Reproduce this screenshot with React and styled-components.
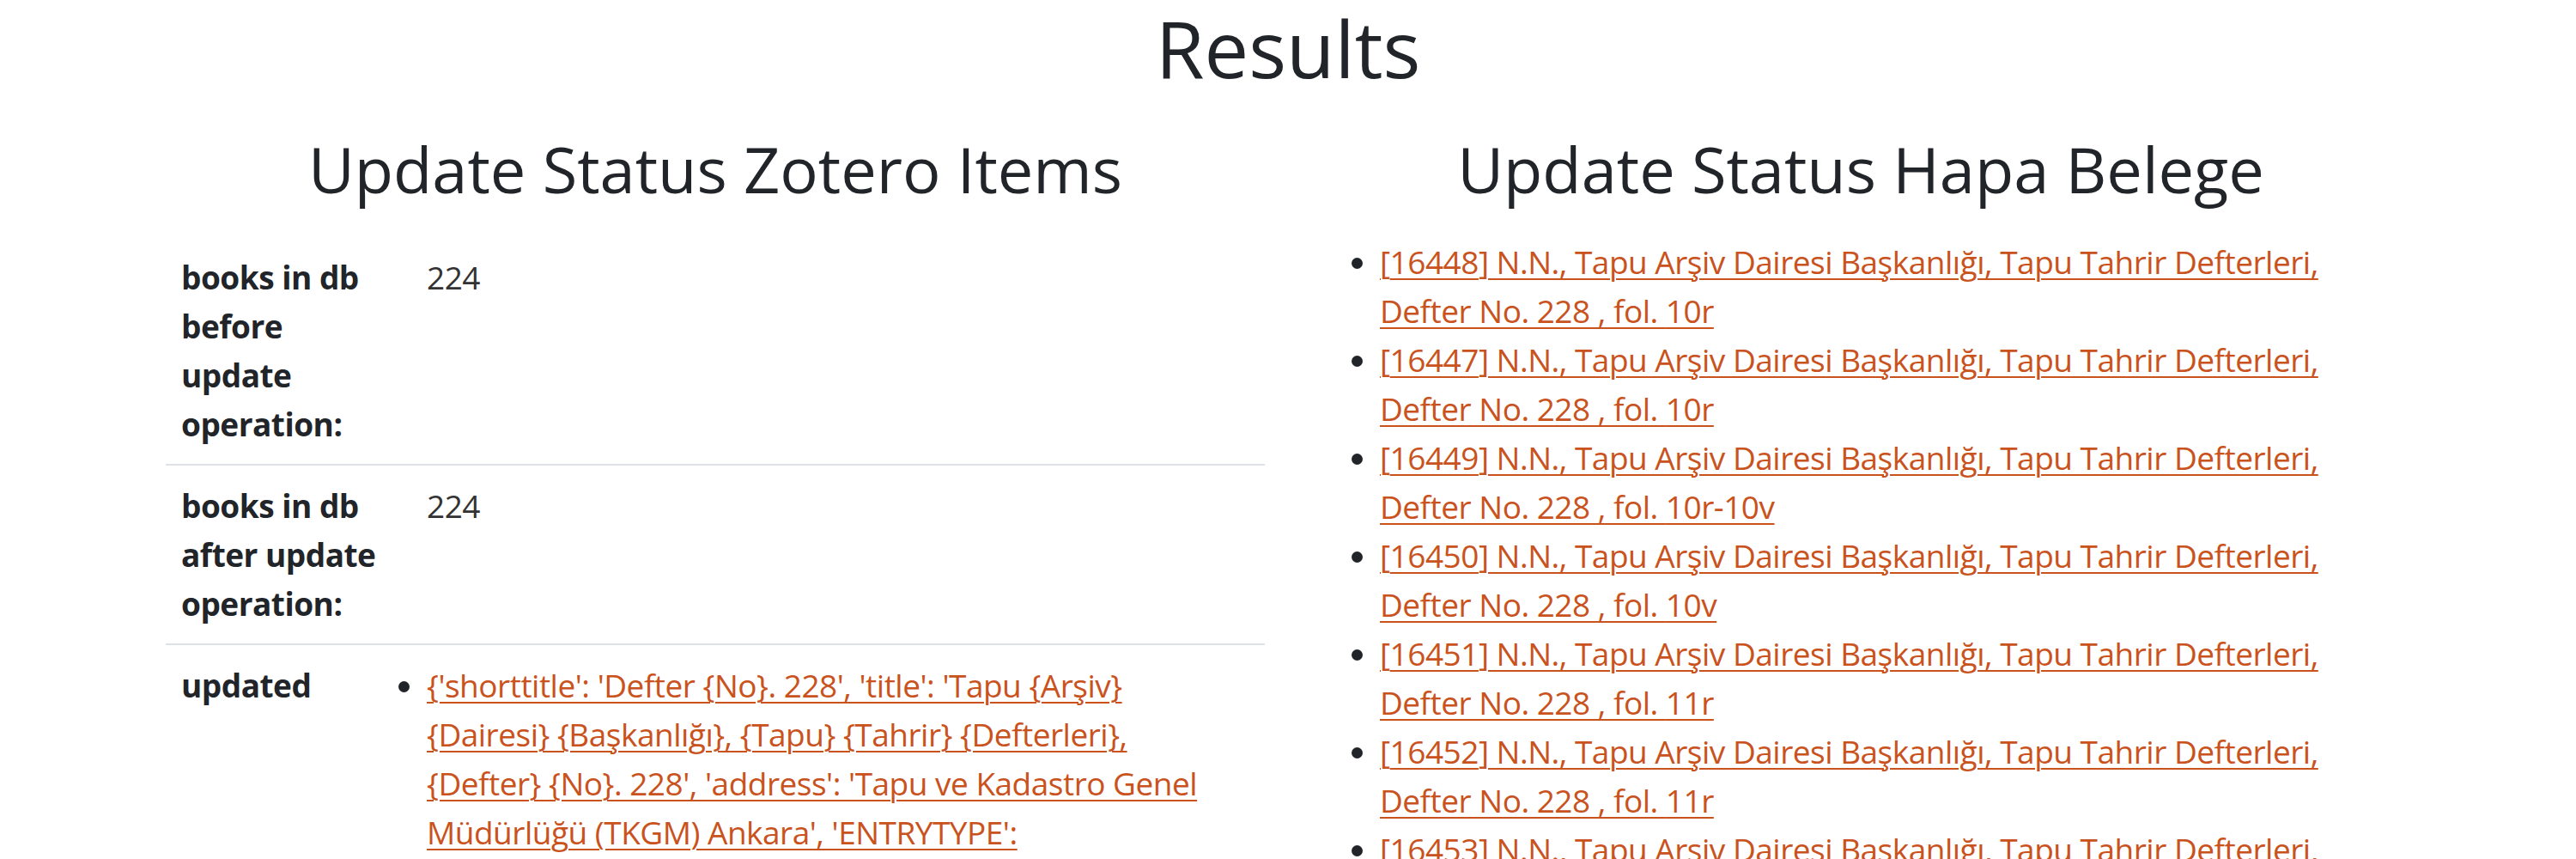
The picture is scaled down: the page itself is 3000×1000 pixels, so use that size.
import React from 'react'
import styled, { createGlobalStyle } from 'styled-components'

const GlobalStyle = createGlobalStyle`
  html, body {
    margin: 0;
    padding: 0;
    background: #fff;
    overflow: hidden;
  }
  body {
    font-family: "Open Sans", "Noto Sans", sans-serif;
    font-size: 37px;
    line-height: 57px;
    letter-spacing: -0.5px;
    color: #212529;
  }
`

const statusRows = [
  { label: ['books in db', 'before', 'update', 'operation:'], value: '224' },
  { label: ['books in db', 'after update', 'operation:'], value: '224' }
]

const updatedLines = [
  "{'shorttitle': 'Defter {No}. 228', 'title': 'Tapu {Arşiv}",
  '{Dairesi} {Başkanlığı}, {Tapu} {Tahrir} {Defterleri},',
  "{Defter} {No}. 228', 'address': 'Tapu ve Kadastro Genel",
  "Müdürlüğü (TKGM) Ankara', 'ENTRYTYPE':",
  "'book', 'ID': 'TapuArsivDairesiBaskanligi228', 'publisher':",
  "'Tapu Arşiv Dairesi Başkanlığı'}"
]

const belege = [
  { id: 16448, fol: '10r' },
  { id: 16447, fol: '10r' },
  { id: 16449, fol: '10r-10v' },
  { id: 16450, fol: '10v' },
  { id: 16451, fol: '11r' },
  { id: 16452, fol: '11r' },
  { id: 16453, fol: '11v' },
  { id: 16454, fol: '11v-12r' },
  { id: 16455, fol: '12r' }
]

const App = () => {
  return (
    <>
      <GlobalStyle />
      <Page>
        <Title>Results</Title>
        <Columns>
          <Column>
            <Heading>Update Status Zotero Items</Heading>
            <Table>
              <tbody>
                {statusRows.map((row, i) => (
                  <Row key={i}>
                    <Label>
                      {row.label.map((line, j) => (
                        <LabelLine key={j}>{line}</LabelLine>
                      ))}
                    </Label>
                    <Value>{row.value}</Value>
                  </Row>
                ))}
                <Row>
                  <Label>
                    <LabelLine>updated</LabelLine>
                  </Label>
                  <Value>
                    <CellList>
                      <li>
                        <Link href="#">
                          {updatedLines.map((line, j) => (
                            <React.Fragment key={j}>
                              {line}
                              {j < updatedLines.length - 1 && <br />}
                            </React.Fragment>
                          ))}
                        </Link>
                      </li>
                    </CellList>
                  </Value>
                </Row>
              </tbody>
            </Table>
          </Column>

          <Column>
            <Heading>Update Status Hapa Belege</Heading>
            <BelegList>
              {belege.map(b => (
                <li key={b.id}>
                  <Link href="#">
                    [{b.id}] N.N., Tapu Arşiv Dairesi Başkanlığı, Tapu Tahrir Defterleri, Defter No. 228 , fol. {b.fol}
                  </Link>
                </li>
              ))}
            </BelegList>
          </Column>
        </Columns>
      </Page>
    </>
  )
}

const Page = styled.div`
  width: 2614px;
  margin: 0 auto;
  padding-top: 1px;
`

const Title = styled.h1`
  margin: 0 0 42px;
  text-align: center;
  font-size: 92px;
  font-weight: 500;
  line-height: 1.2;
  letter-spacing: 0;
`

const Columns = styled.div`
  display: grid;
  grid-template-columns: 1fr 1fr;
  column-gap: 54px;
`

const Column = styled.div`
  min-width: 0;
`

const Heading = styled.h2`
  margin: 0 0 34px;
  text-align: center;
  font-size: 74px;
  font-weight: 500;
  line-height: 1.2;
  letter-spacing: 0;
`

const Table = styled.table`
  width: 100%;
  border-collapse: collapse;
`

const Row = styled.tr`
  border-bottom: 2px solid #dee2e6;
  &:last-child {
    border-bottom: none;
  }
`

const Label = styled.th`
  width: 250px;
  padding: 18px;
  text-align: left;
  vertical-align: top;
  font-weight: 700;
`

const LabelLine = styled.span`
  display: block;
  white-space: nowrap;
`

const Value = styled.td`
  padding: 18px;
  vertical-align: top;
  color: #333;
`

const CellList = styled.ul`
  margin: 0;
  padding: 0;
  color: #212529;
`

const BelegList = styled.ul`
  margin: 0;
  padding: 0 0 0 80px;
  max-width: 1100px;
`

const Link = styled.a`
  color: #c9521d;
  text-decoration: underline;
  text-decoration-thickness: 2px;
  text-underline-offset: 5px;
`

export default App
